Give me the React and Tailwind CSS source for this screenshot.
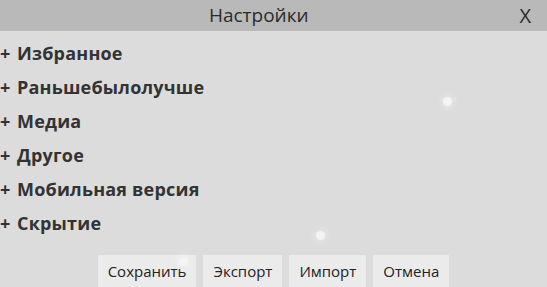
import React from 'react'

const sections = ['Избранное', 'Раньшебылолучше', 'Медиа', 'Другое', 'Мобильная версия', 'Скрытие']
const buttons = ['Сохранить', 'Экспорт', 'Импорт', 'Отмена']

const Dot = ({ className }) => (
    <span className={`absolute w-[9px] h-[9px] rounded-full bg-[#f4f4f4] shadow-[0_0_6px_3px_rgba(255,255,255,0.25)] ${className}`} />
)

export default function App() {
    return (
        <div className="relative w-[547px] h-[287px] overflow-hidden bg-[#dcdcdc] font-['Open_Sans',sans-serif] text-[#333] flex flex-col">
            {/* Header */}
            <div className="h-[31px] bg-[#b9b9b9] flex items-center pr-[16px]">
                <span className="flex-1 text-center text-[19px] text-[#2b2b2b] leading-none">Настройки</span>
                <span className="ml-[2px] text-[20px] leading-none text-[#2b2b2b]">X</span>
            </div>

            {/* Sections */}
            <div className="flex flex-col pt-[5px]">
                {sections.map(s => (
                    <div key={s} className="h-[34px] flex items-center font-bold text-[18px] tracking-[0.2px] text-[#333] whitespace-nowrap">
                        <span className="w-[17px]">+</span>
                        {s}
                    </div>
                ))}
            </div>

            {/* Buttons */}
            <div className="mt-auto flex justify-center gap-[7px]">
                {buttons.map(b => (
                    <button key={b} className="h-[32px] px-[10px] bg-[#ebebeb] text-[15px] text-[#222] leading-none">
                        {b}
                    </button>
                ))}
            </div>

            <Dot className="left-[443px] top-[97px]" />
            <Dot className="left-[316px] top-[231px]" />
            <Dot className="left-[179px] top-[257px]" />
        </div>
    )
}
